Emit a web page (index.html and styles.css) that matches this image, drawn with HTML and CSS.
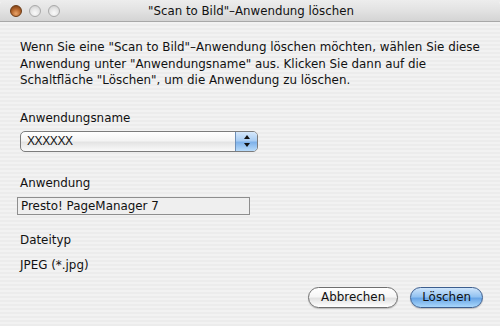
FILE: index.html
```html
<!DOCTYPE html>
<html>
<head>
<meta charset="utf-8">
<link rel="stylesheet" href="styles.css">
</head>
<body>
<div class="window">
  <div class="titlebar">
    <div class="lights">
      <span class="light close"></span>
      <span class="light"></span>
      <span class="light"></span>
    </div>
    <div class="title">"Scan to Bild"–Anwendung löschen</div>
  </div>
  <div class="content">
    <p class="intro">Wenn Sie eine "Scan to Bild"–Anwendung löschen möchten, wählen Sie diese<br>Anwendung unter "Anwendungsname" aus. Klicken Sie dann auf die<br>Schaltfläche "Löschen", um die Anwendung zu löschen.</p>
    <div class="label l1">Anwendungsname</div>
    <div class="popup">
      <span class="popup-text">XXXXXX</span>
      <span class="popup-arrows">
        <svg width="8" height="14" viewBox="0 0 8 14"><path d="M4 1 L7 5 L1 5 Z" fill="#111"/><path d="M4 13 L7 9 L1 9 Z" fill="#111"/></svg>
      </span>
    </div>
    <div class="label l2">Anwendung</div>
    <div class="field">Presto! PageManager 7</div>
    <div class="label l3">Dateityp</div>
    <div class="value">JPEG (*.jpg)</div>
    <div class="buttons">
      <button class="btn">Abbrechen</button>
      <button class="btn primary">Löschen</button>
    </div>
  </div>
</div>
</body>
</html>
```

FILE: styles.css
```css
html, body {
  margin: 0;
  padding: 0;
}
body {
  width: 500px;
  height: 326px;
  overflow: hidden;
  font-family: "DejaVu Sans", "Liberation Sans", sans-serif;
  font-size: 11.9px;
  color: #111;
}
.window {
  width: 500px;
  height: 326px;
  display: flex;
  flex-direction: column;
  background: repeating-linear-gradient(to bottom, #ececec 0px, #ececec 2px, #f2f2f2 2px, #f2f2f2 4px);
}
.titlebar {
  height: 21px;
  display: flex;
  align-items: center;
  background: linear-gradient(to bottom, #ededed 0%, #e2e2e2 50%, #d4d4d4 100%);
  border-bottom: 1px solid #a8a8a8;
  border-radius: 5px 5px 0 0;
}
.lights {
  display: flex;
  gap: 7px;
  padding-left: 10px;
}
.light {
  width: 12px;
  height: 12px;
  border-radius: 50%;
  box-sizing: border-box;
  border: 1px solid #a9a9a9;
  background: radial-gradient(circle at 50% 70%, #fafafa 0%, #e6e6e6 50%, #c8c8c8 100%);
}
.light.close {
  border-color: #6b3a14;
  background: radial-gradient(circle at 50% 75%, #e9a46a 0%, #b4652b 50%, #6e3611 100%);
}
.title {
  flex: 1;
  text-align: center;
  font-size: 11.8px;
  color: #111;
  margin-left: -58px;
  padding-top: 1px;
}
.content {
  flex: 1;
  padding: 17px 20px 0 20px;
  display: flex;
  flex-direction: column;
}
.intro {
  margin: 0;
  line-height: 16.5px;
  white-space: nowrap;
}
.label {
  line-height: 16px;
}
.l1 { margin-top: 21px; }
.popup {
  margin-top: 5px;
  width: 238px;
  height: 21px;
  box-sizing: border-box;
  border: 1px solid #7c7c7c;
  border-radius: 5px;
  background: linear-gradient(to bottom, #ffffff 0%, #f4f4f4 45%, #e4e4e4 55%, #fafafa 100%);
  display: flex;
  align-items: center;
  overflow: hidden;
}
.popup-text {
  flex: 1;
  padding-left: 6px;
  font-size: 12px;
  font-family: "Liberation Sans", sans-serif;
  letter-spacing: -0.4px;
}
.popup-arrows {
  width: 21px;
  height: 100%;
  border-left: 1px solid #6d8fb8;
  background: linear-gradient(to bottom, #d6e8fb 0%, #a9cdf3 45%, #7fb2ea 55%, #b8dbfa 100%);
  display: flex;
  align-items: center;
  justify-content: center;
}
.l2 { margin-top: 23px; }
.field {
  margin-top: 6px;
  margin-left: -3px;
  width: 233px;
  height: 18px;
  box-sizing: border-box;
  border: 1px solid #8e8e8e;
  background: #efefef;
  padding-left: 3px;
  line-height: 16px;
}
.l3 { margin-top: 17px; }
.value {
  margin-top: 9px;
  line-height: 16px;
}
.buttons {
  margin-top: 14px;
  margin-right: -3px;
  display: flex;
  justify-content: flex-end;
  gap: 12px;
}
.btn {
  font-family: "DejaVu Sans", sans-serif;
  font-size: 11.9px;
  color: #111;
  height: 21px;
  padding: 0 12px;
  border-radius: 11px;
  border: 1px solid #6f6f6f;
  background: linear-gradient(to bottom, #ffffff 0%, #f6f6f6 45%, #e2e2e2 55%, #ffffff 100%);
  box-shadow: 0 1px 1px rgba(0,0,0,0.2);
}
.btn.primary {
  padding: 0 11px;
  border-color: #3d5e8e;
  background: linear-gradient(to bottom, #cfe5fb 0%, #94c3f1 45%, #6aa6e6 55%, #a9d7fb 100%);
}
```
